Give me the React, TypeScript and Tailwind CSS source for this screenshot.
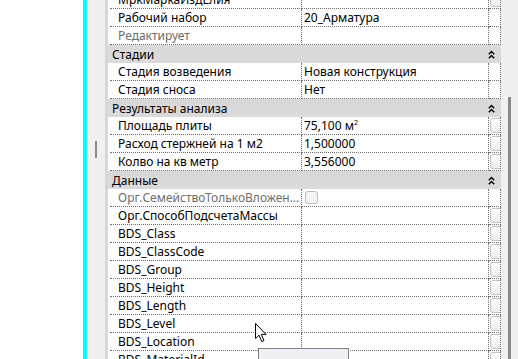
import React from "react"

type RowProps = {
  label: string
  value?: React.ReactNode
  gray?: boolean
  btn?: boolean
  check?: boolean
}

const Row = ({ label, value, gray, btn, check }: RowProps) => {
  return (
    <div className="flex h-[18px] bg-white shrink-0 pl-[2px]">
      <div
        className={`w-[192px] h-[18px] flex items-center pl-[8px] border-r border-b border-dotted border-[#6f6f6f] whitespace-nowrap overflow-hidden ${gray ? "text-[#6d6d6d]" : "text-black"}`}
      >
        {label}
      </div>
      <div className="w-[187px] h-[18px] flex items-center pl-[2px] border-r border-b border-dotted border-[#6f6f6f] whitespace-nowrap overflow-hidden text-black">
        {check ? (
          <div className="w-[13px] h-[13px] ml-[1px] rounded-[3px] border border-[#bcbcbc] bg-[#f5f5f5]" />
        ) : (
          value
        )}
      </div>
      <div className="w-[12px] h-[18px] border-r border-b border-dotted border-[#6f6f6f] overflow-hidden">
        {btn && (
          <div className="w-[14px] h-[15px] ml-[1px] mt-[1px] rounded-[3px] border border-[#c4c4c4] bg-gradient-to-b from-white to-[#ececec]" />
        )}
      </div>
    </div>
  )
}

const Group = ({ title }: { title: string }) => {
  return (
    <div className="flex h-[18px] shrink-0 items-center justify-between bg-[#dadada] pl-[4px] pr-[6px] text-black">
      <span>{title}</span>
      <svg width="7" height="9" viewBox="0 0 7 9" className="mt-[1px]">
        <polyline points="0.8,4.2 3.5,1.5 6.2,4.2" fill="none" stroke="#000" strokeWidth="1.4" />
        <polyline points="0.8,8.2 3.5,5.5 6.2,8.2" fill="none" stroke="#000" strokeWidth="1.4" />
      </svg>
    </div>
  )
}

const bds = [
  "BDS_Class",
  "BDS_ClassCode",
  "BDS_Group",
  "BDS_Height",
  "BDS_Length",
  "BDS_Level",
  "BDS_Location",
  "BDS_MaterialId",
]

export default function App() {
  return (
    <div className="relative flex w-[518px] h-[359px] overflow-hidden bg-white font-['Noto_Sans',sans-serif] text-[12px] leading-[17px]">
      <div className="w-[83px] shrink-0 bg-white" />
      <div className="w-[4px] shrink-0 bg-[#00ffff]" />
      <div className="w-[18px] shrink-0 bg-[#f0f0f0] pt-[141px] pl-[8px]">
        <div className="w-[2px] h-[17px] bg-[#8c8c8c]" />
      </div>
      <div className="w-[3px] shrink-0 bg-[#d6d6d6]" />

      <div className="w-[393px] shrink-0 flex flex-col -mt-[9px]">
        <Row label="МркМаркаИздЕлия" btn />
        <Row label="Рабочий набор" value="20_Арматура" />
        <Row label="Редактирует" gray />
        <Group title="Стадии" />
        <Row label="Стадия возведения" value="Новая конструкция" />
        <Row label="Стадия сноса" value="Нет" />
        <Group title="Результаты анализа" />
        <Row
          label="Площадь плиты"
          value={
            <span>
              75,100 м<sup className="text-[7px] -top-[0.7em]">2</sup>
            </span>
          }
          btn
        />
        <Row label="Расход стержней на 1 м2" value="1,500000" btn />
        <Row label="Колво на кв метр" value="3,556000" btn />
        <Group title="Данные" />
        <Row label="Орг.СемействоТолькоВложен..." gray check />
        <Row label="Орг.СпособПодсчетаМассы" btn />
        {bds.map((b) => (
          <Row key={b} label={b} btn />
        ))}
      </div>

      <div className="w-[17px] shrink-0 bg-[#f0f0f0] pt-[97px] pl-[7px]">
        <div className="w-[3px] h-[300px] bg-[#888888]" />
      </div>

      <div className="absolute left-[258px] top-[348px] w-[91px] h-[20px] border border-[#808080] bg-[#efeff6]" />

      <svg
        className="absolute left-[255px] top-[323px]"
        width="13"
        height="20"
        viewBox="0 0 13 20"
      >
        <path
          d="M0.5 0.5 L0.5 15.5 L4 12.2 L6.8 18.6 L9 17.6 L6.3 11.4 L11 11.4 Z"
          fill="#fff"
          stroke="#000"
          strokeWidth="1"
          strokeLinejoin="miter"
        />
      </svg>
    </div>
  )
}
